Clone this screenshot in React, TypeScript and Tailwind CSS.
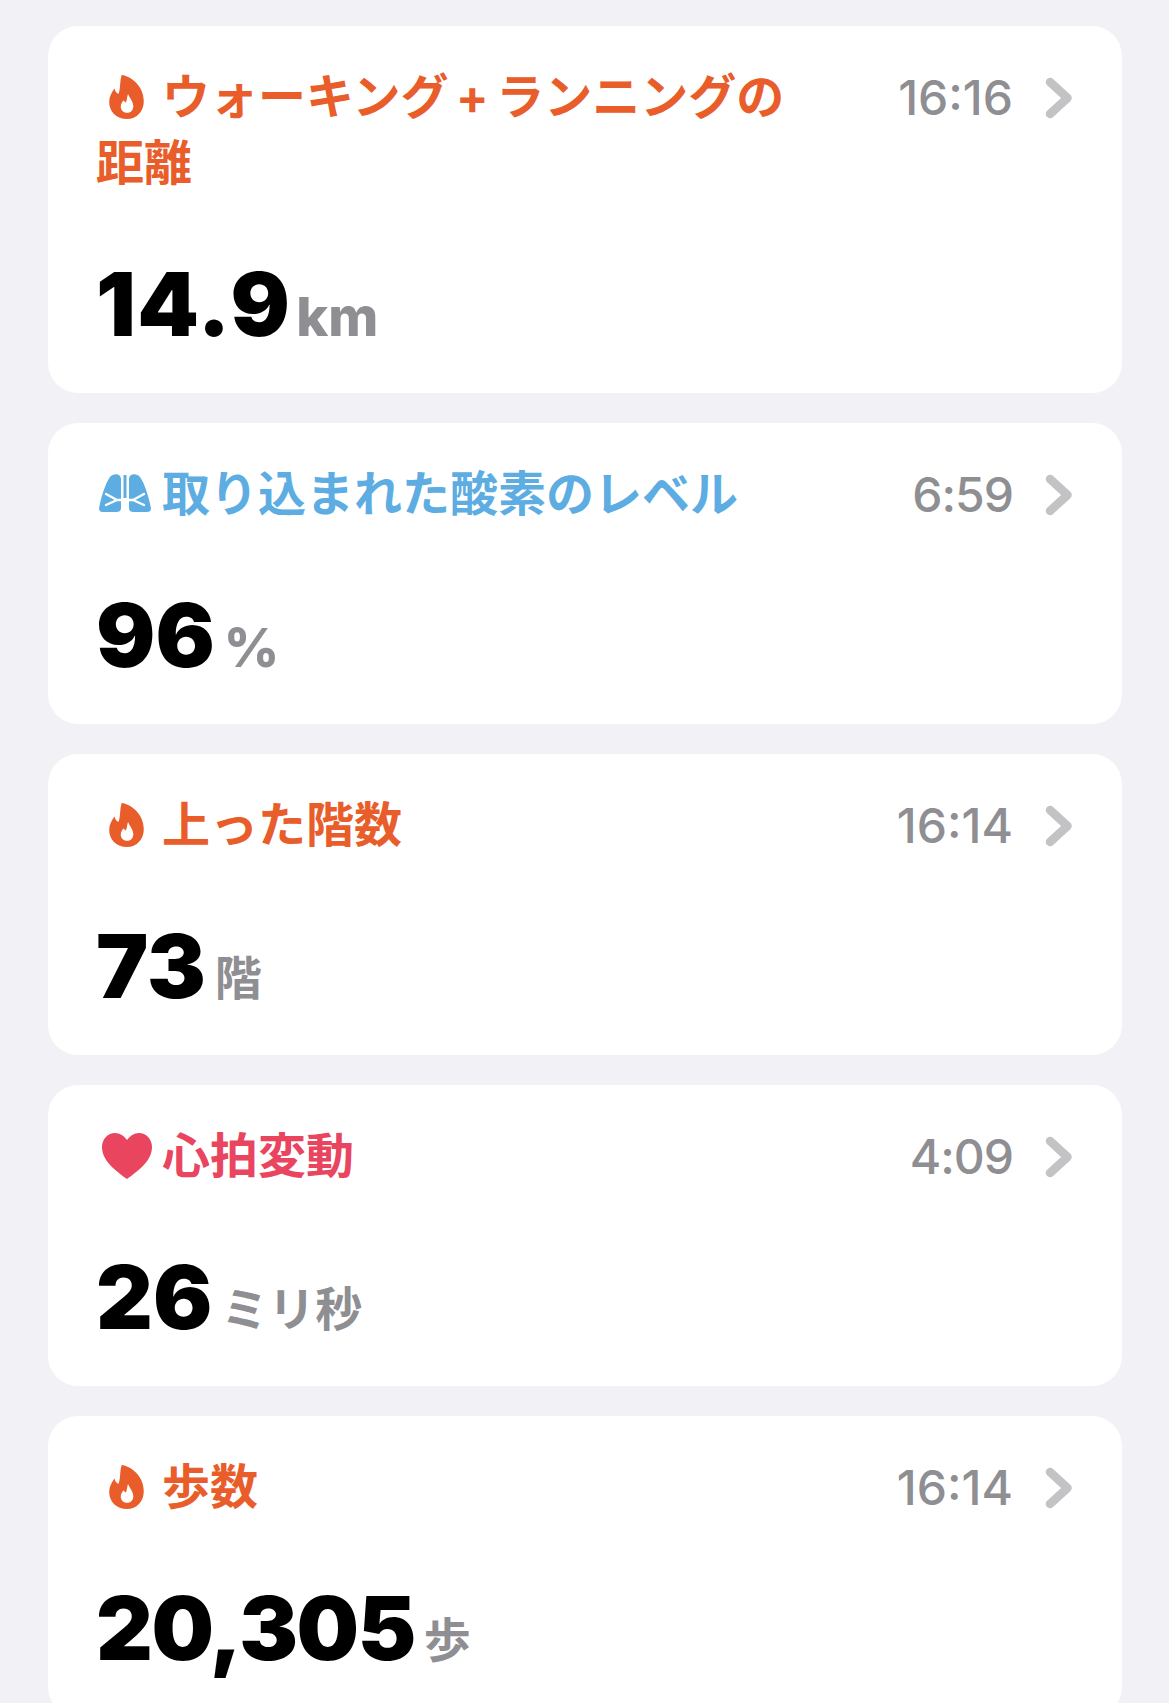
import React from 'react';

const ORANGE = 'text-[#e85d2a]';

function Flame() {
  return (
    <svg viewBox="0 0 33 42" className="w-[35px] h-[44px]" fill="currentColor">
      <path
        fillRule="evenodd"
        d="M12 0c8 1 21 10 21 25 0 10-7 17-16 17C7 42 0 35 0 26c0-5 2-9 5-13 1 3 2 5 4 5 2-6 1-13 3-18ZM18 18c.5 3 5 7 5 12 0 4-3 6-6 6-3.500 0-6-2.500-6-6 0-3 2-5 3-6 .5 1.500 1 2 2 2 1-2 1-5 2-8Z"
      />
    </svg>
  );
}

function Lungs() {
  return (
    <svg viewBox="0 0 52 38" className="w-[52px] h-[38px]" fill="currentColor">
      <path d="M11 3c3-4 11-4 11 2v29c0 3-2 4-5 4H4c-4 0-4.500-3-3.500-6C2 24 6 10 11 3Z" />
      <path d="M41 3c-3-4-11-4-11 2v29c0 3 2 4 5 4h13c4 0 4.500-3 3.500-6C50 24 46 10 41 3Z" />
      <rect x="24.500" y="1" width="3" height="23" />
      <path d="M7 20l11 6-11 5M45 20l-11 6 11 5M18 26h16" fill="none" stroke="#fff" strokeWidth="2.400" strokeLinecap="round" strokeLinejoin="round" />
    </svg>
  );
}

function Heart() {
  return (
    <svg viewBox="0 0 50 46" className="w-[50px] h-[46px]" fill="currentColor">
      <path d="M25 46C14 38 0 28 0 14 0 6 6 0 13 0c5 0 9 3 12 7 3-4 7-7 12-7 7 0 13 6 13 14 0 14-14 24-25 32Z" />
    </svg>
  );
}

function Chevron() {
  return (
    <svg viewBox="0 0 28 42" className="w-[28px] h-[42px]" fill="none" stroke="#c3c3c6" strokeWidth="8.500" strokeLinecap="round" strokeLinejoin="round">
      <path d="M5 5 22.500 21 5 37" />
    </svg>
  );
}

const LATIN_UNIT = 'text-[54px] font-extrabold';
const CJK_UNIT = 'text-[47px] font-bold -translate-y-[3px]';

const cards = [
  { key: 'walk', icon: <Flame />, iconBox: 'w-[66px] pl-[13px] align-[-5px]', color: ORANGE, title: 'ウォーキング\u2009+\u2009ランニングの距離', time: '16:16', timeTrack: 'tracking-normal', value: '14.9', track: 'tracking-[1.500px]', unit: 'km', unitClass: `${LATIN_UNIT} -ml-[4px]`, h: 'h-[367px]' },
  { key: 'o2', icon: <Lungs />, iconBox: 'w-[66px] pl-[3px] align-[-1px]', color: 'text-[#5dade2]', title: '取り込まれた酸素のレベル', time: '6:59', timeTrack: 'tracking-[-1px]', value: '96', track: 'tracking-normal', unit: '%', unitClass: LATIN_UNIT, h: 'h-[301px]' },
  { key: 'floors', icon: <Flame />, iconBox: 'w-[66px] pl-[13px] align-[-5px]', color: ORANGE, title: '上った階数', time: '16:14', timeTrack: 'tracking-normal', value: '73', track: 'tracking-normal', unit: '階', unitClass: CJK_UNIT, h: 'h-[301px]' },
  { key: 'hrv', icon: <Heart />, iconBox: 'w-[66px] pl-[6px] align-[-6px]', color: 'text-[#e9455f]', title: '心拍変動', time: '4:09', timeTrack: 'tracking-[-1px]', value: '26', track: 'tracking-normal', unit: 'ミリ秒', unitClass: CJK_UNIT, h: 'h-[301px]' },
  { key: 'steps', icon: <Flame />, iconBox: 'w-[66px] pl-[13px] align-[-5px]', color: ORANGE, title: '歩数', time: '16:14', timeTrack: 'tracking-normal', value: '20,305', track: 'tracking-[-1.500px]', unit: '歩', unitClass: CJK_UNIT, h: 'h-[301px]' },
];

export default function App() {
  return (
    <div className="h-[1703px] overflow-hidden bg-[#f1f1f6] px-[48px] pt-[26px] font-['Inter','Noto_Sans_CJK_JP',sans-serif]">
      <div className="flex flex-col gap-[30px] w-[1074px]">
        {cards.map(card => (
          <div key={card.key} className={`bg-white rounded-[30px] pl-[48px] pr-[49px] pt-[38px] shrink-0 flex flex-col justify-between pb-[45px] ${card.h}`}>
            {/* Header */}
            <div className="flex justify-between items-start">
              <div className={`w-[700px] text-[48px] leading-[66px] font-bold ${card.color}`}>
                <span className={`inline-flex ${card.iconBox}`}>{card.icon}</span>
                {card.title}
              </div>
              <div className="flex items-center gap-[32px] h-[68px]">
                <span className={`text-[48px] font-medium text-[#8e8e93] ${card.timeTrack}`}>{card.time}</span>
                <Chevron />
              </div>
            </div>

            {/* Value */}
            <div className="flex items-baseline gap-[9px]">
              <span className={`text-[88px] leading-[88px] font-black text-black ${card.track}`}>{card.value}</span>
              <span className={`leading-[50px] text-[#8e8e93] ${card.unitClass}`}>{card.unit}</span>
            </div>
          </div>
        ))}
      </div>
    </div>
  );
}
